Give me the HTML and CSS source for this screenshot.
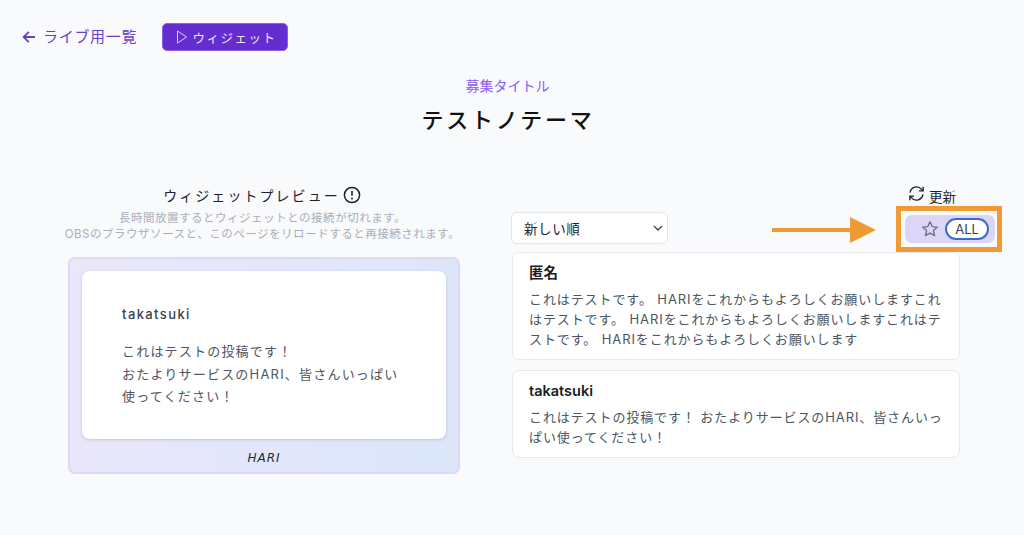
FILE: index.html
```html
<!DOCTYPE html>
<html lang="ja">
<head>
<meta charset="utf-8">
<title>ウィジェット</title>
<link rel="stylesheet" href="styles.css">
</head>
<body>
<header class="topbar">
  <a class="back">
    <svg class="back-icon" viewBox="0 0 14 14" width="14" height="14"><path d="M13 7H1.800M6.800 1.800 1.600 7l5.200 5.200" fill="none" stroke="#6b3fc4" stroke-width="1.800"/></svg>
    <span class="back-label">ライブ用一覧</span>
  </a>
  <button class="widget-btn">
    <svg viewBox="0 0 12 16" width="12" height="16"><path d="M1.500 2 10.500 8 1.500 14Z" fill="none" stroke="#d9cdf5" stroke-width="1"/></svg>
    <span>ウィジェット</span>
  </button>
</header>
<section class="heading">
  <p class="eyebrow">募集タイトル</p>
  <h1 class="title">テストノテーマ</h1>
</section>
<main class="columns">
  <section class="preview">
    <h2 class="preview-title">ウィジェットプレビュー
      <svg viewBox="0 0 18 18" width="18" height="18"><circle cx="9" cy="9" r="7.600" fill="none" stroke="#1f2329" stroke-width="1.500"/><path d="M9 4.800v5" stroke="#1f2329" stroke-width="1.600"/><circle cx="9" cy="12.600" r="1" fill="#1f2329"/></svg>
    </h2>
    <p class="preview-note">長時間放置するとウィジェットとの接続が切れます。<br>OBSのブラウザソースと、このページをリロードすると再接続されます。</p>
    <div class="stage">
      <div class="bubble">
        <p class="bubble-name">takatsuki</p>
        <p class="bubble-text">これはテストの投稿です！<br>おたよりサービスのHARI、皆さんいっぱい<br>使ってください！</p>
      </div>
      <p class="brand">HARI</p>
    </div>
  </section>
  <section class="posts">
    <div class="refresh-row">
      <svg viewBox="0 0 18 18" width="17" height="17"><g fill="none" stroke="#1f2329" stroke-width="1.500"><path d="M2.200 8A6.900 6.900 0 0 1 14.400 4.600L15.600 6"/><path d="M15.800 10A6.900 6.900 0 0 1 3.600 13.400L2.400 12"/><path d="M16 1.800V6.200H11.600"/><path d="M2 16.200V11.800H6.400"/></g></svg>
      <span class="refresh-label">更新</span>
    </div>
    <div class="control-row">
      <div class="select">新しい順
        <svg viewBox="0 0 10 6" width="10" height="6"><path d="M1 1l4 4 4-4" fill="none" stroke="#374151" stroke-width="1.300"/></svg>
      </div>
      <div class="filter">
        <svg viewBox="0 0 20 20" width="18" height="18"><path d="M10 2l2.400 5.300 5.700.6-4.300 3.800 1.300 5.700L10 14.500l-5.100 2.900 1.300-5.700L1.900 7.900l5.700-.6z" fill="none" stroke="#6b7280" stroke-width="1.500" stroke-linejoin="round"/></svg>
        <span class="all-pill">ALL</span>
      </div>
    </div>
    <article class="post">
      <h3 class="post-name">匿名</h3>
      <p class="post-text">これはテストです。 HARIをこれからもよろしくお願いしますこれはテストです。 HARIをこれからもよろしくお願いしますこれはテストです。 HARIをこれからもよろしくお願いします</p>
    </article>
    <article class="post">
      <h3 class="post-name">takatsuki</h3>
      <p class="post-text">これはテストの投稿です！ おたよりサービスのHARI、皆さんいっぱい使ってください！</p>
    </article>
  </section>
</main>
<div class="annotation">
  <svg class="arrow" viewBox="0 0 104 26" width="104" height="26"><path d="M0 11h78V0l26 13-26 13V15H0z" fill="#f09a35"/></svg>
  <div class="highlight"></div>
</div>
</body>
</html>
```
FILE: styles.css
```css
* { box-sizing: border-box; }
html, body { margin: 0; padding: 0; }
body {
  width: 1024px;
  height: 535px;
  overflow: hidden;
  position: relative;
  background: #f9fafc;
  color: #111827;
  font-family: Inter, "Noto Sans CJK JP", sans-serif;
}
p, h1, h2, h3 { margin: 0; font-weight: 400; }

.topbar {
  display: flex;
  align-items: center;
  height: 28px;
  margin-top: 23px;
  padding-left: 22px;
}
.back {
  display: flex;
  align-items: center;
  gap: 7px;
  width: 139.500px;
  color: #6b3fc4;
  font-size: 15px;
  letter-spacing: 0.700px;
}
.back-icon { margin-top: -1px; }
.back-label { margin-top: -4px; }
.widget-btn {
  display: flex;
  align-items: center;
  gap: 5px;
  width: 126px;
  height: 28px;
  padding: 0 0 0 13px;
  border: 1px solid #8a5fe0;
  border-radius: 5px;
  background: #652dd0;
  color: #eee8fb;
  font: inherit;
  font-size: 12.500px;
  letter-spacing: 1.500px;
}

.heading { text-align: center; margin-top: 26px; padding-right: 8px; }
.eyebrow { color: #8b5cf6; font-size: 14px; line-height: 18px; padding-right: 1px; }
.title {
  margin-top: 9px;
  font-size: 22px;
  line-height: 32px;
  font-weight: 500;
  letter-spacing: 2.700px;
  color: #111;
}

.columns { display: flex; margin-top: 48px; padding-left: 58px; }
.preview { width: 408px; display: flex; flex-direction: column; align-items: center; }
.preview-title {
  display: flex;
  align-items: center;
  gap: 3px;
  height: 22px;
  font-size: 14px;
  letter-spacing: 2.050px;
  color: #1f2329;
}
.preview-note {
  margin: 4px 0 0 1px;
  text-align: center;
  font-size: 11.500px;
  line-height: 16px;
  color: #a9afb9;
  letter-spacing: 0.520px;
  white-space: nowrap;
}
.stage {
  width: 392px;
  height: 217px;
  margin: 15px 0 0 4px;
  padding: 12px 12px 0;
  border: 2px solid #dcd9f6;
  border-radius: 7px;
  background: linear-gradient(100deg, #ebe7fb, #dbe6f9);
}
.bubble {
  height: 168px;
  padding: 34px 40px 0;
  background: #fff;
  border-radius: 8px;
  box-shadow: 0 1px 3px rgba(90, 90, 130, .25);
}
.bubble-name { font-size: 13px; line-height: 18px; letter-spacing: 1.400px; color: #374151; font-weight: 500; }
.bubble-text { margin-top: 17px; font-size: 13px; line-height: 22.500px; letter-spacing: 1.200px; color: #4b5563; white-space: nowrap; }
.brand {
  margin-top: 10px;
  text-align: center;
  font-family: "DejaVu Sans", sans-serif;
  font-style: italic;
  font-size: 12px;
  line-height: 18px;
  letter-spacing: 1px;
  color: #1f2937;
}

.posts { width: 490px; margin-left: 45px; }
.refresh-row {
  display: flex;
  justify-content: flex-end;
  align-items: center;
  gap: 4px;
  height: 20px;
  padding-right: 45px;
  margin-top: -1px;
  font-size: 13.500px;
  color: #1f2329;
}
.refresh-label { margin-top: 5px; }
.control-row { display: flex; justify-content: space-between; align-items: flex-start; height: 40px; margin-top: 9px; }
.select {
  display: flex;
  align-items: center;
  justify-content: space-between;
  width: 157px;
  height: 32px;
  padding: 0 4px 0 12px;
  background: #fff;
  border: 1px solid #e3e5ea;
  border-radius: 6px;
  font-size: 13.500px;
  letter-spacing: .6px;
  color: #1f2329;
}
.filter {
  display: flex;
  align-items: center;
  gap: 6px;
  width: 90px;
  height: 28px;
  padding-left: 16px;
  margin: 3px 6px 0 0;
  background: #dcd5f8;
  border-radius: 7px;
}
.all-pill {
  width: 44px;
  height: 22px;
  line-height: 18px;
  text-align: center;
  background: #fff;
  border: 2px solid #3b6cc9;
  border-radius: 11px;
  font-size: 13px;
  color: #374151;
}
.post {
  width: 448px;
  margin-left: 1px;
  margin-bottom: 10px;
  padding: 9px 10px 10px 16px;
  background: #fff;
  border: 1px solid #e7e8ec;
  border-radius: 7px;
}
.post-name { font-size: 14.500px; line-height: 22px; font-weight: 600; color: #1a1d23; }
.post-text { margin-top: 5px; font-size: 13px; line-height: 20px; letter-spacing: .9px; color: #4b5563; }

.annotation { position: absolute; left: 0; top: 0; }
.arrow { position: absolute; left: 772px; top: 217px; }
.highlight {
  position: absolute;
  left: 896px;
  top: 206px;
  width: 106px;
  height: 46px;
  border: 5px solid #f09a35;
}
```
